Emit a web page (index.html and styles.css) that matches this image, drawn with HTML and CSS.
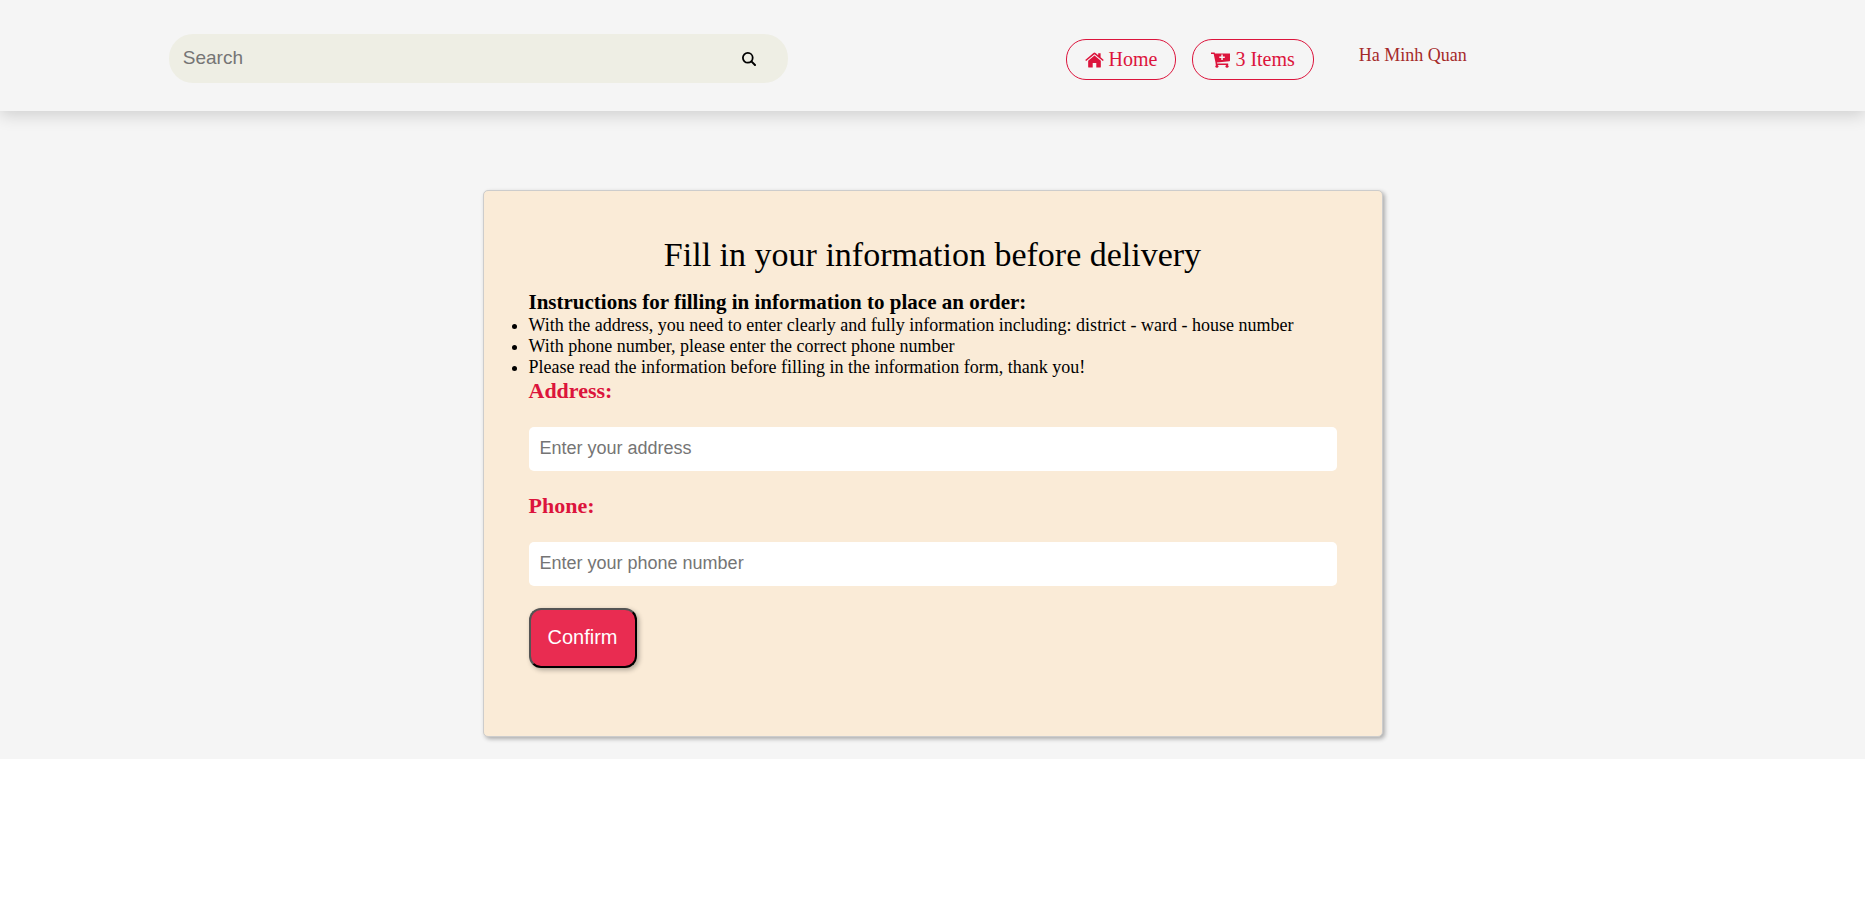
FILE: index.html
```html
<!DOCTYPE html>
<html lang="en">
<head>
<meta charset="utf-8">
<meta name="viewport" content="width=device-width, initial-scale=1">
<title>Delivery information</title>
<link rel="stylesheet" href="styles.css">
</head>
<body>
<div class="page">
  <header class="header">
    <form class="search" role="search">
      <input class="search-input" type="search" placeholder="Search" aria-label="Search">
      <button class="search-button" type="submit" aria-label="Search">
        <svg class="search-icon" viewBox="0 0 14 14" aria-hidden="true"><circle cx="5.8" cy="5.8" r="4.9" fill="none" stroke="currentColor" stroke-width="1.8"/><path d="M9.4 9.4l3.600 3.600" stroke="currentColor" stroke-width="2" stroke-linecap="round"/></svg>
      </button>
    </form>
    <nav class="nav">
      <a class="pill" href="#"><svg class="pill-icon" viewBox="0 0 18 15" aria-hidden="true"><path fill="currentColor" d="M9 3.300l6 5V13.800a.8.8 0 0 1-.8.8h-3.500v-4.200H7.300v4.200H3.800a.8.8 0 0 1-.8-.8V8.300z"/><path fill="currentColor" d="M.2 7.500L8 .8a1.500 1.500 0 0 1 2 0l2.500 2.200V1h2.300v4L17.800 7.500l-.9 1L9 2 1.100 8.500z"/></svg><span>Home</span></a>
      <a class="pill" href="#"><svg class="pill-icon" viewBox="0 0 19 16" aria-hidden="true"><path fill="currentColor" fill-rule="evenodd" d="M0 .5h3.600l.4 1H19v7a.7.7 0 0 1-.6.7L6 10.500l.2 1H17.200v1.400H4.800L4.400 10 2.700 1.900H0zM10.300 2.600v2H8.300v1.500h2v2h1.500v-2h2V4.600h-2v-2z"/><circle cx="5.900" cy="14.300" r="1.500" fill="currentColor"/><circle cx="16" cy="14.300" r="1.500" fill="currentColor"/></svg><span>3 Items</span></a>
      <a class="user" href="#">Ha Minh Quan</a>
    </nav>
  </header>
  <main class="main">
    <form class="card">
      <h1 class="title">Fill in your information before delivery</h1>
      <h2 class="subtitle">Instructions for filling in information to place an order:</h2>
      <ul class="notes">
        <li>With the address, you need to enter clearly and fully information including: district - ward - house number</li>
        <li>With phone number, please enter the correct phone number</li>
        <li>Please read the information before filling in the information form, thank you!</li>
      </ul>
      <label class="label" for="address">Address:</label>
      <input class="field" id="address" type="text" placeholder="Enter your address">
      <label class="label" for="phone">Phone:</label>
      <input class="field" id="phone" type="tel" placeholder="Enter your phone number">
      <button class="confirm" type="submit">Confirm</button>
    </form>
  </main>
</div>
</body>
</html>
```
FILE: styles.css
```css
* {
  box-sizing: border-box;
  margin: 0;
  padding: 0;
}

body {
  background: #fff;
  color: #000;
  font-family: "Liberation Serif", "Times New Roman", serif;
  font-size: 18px;
}

.page {
  background: #f5f5f5;
  padding-bottom: 22px;
}

.header {
  display: flex;
  justify-content: space-between;
  align-items: flex-start;
  padding: 34px 21.35% 28px 9.05%;
  box-shadow: 0 4px 16px rgba(0, 0, 0, 0.16);
}

.search {
  display: flex;
  align-items: center;
  width: 47.7%;
  height: 49px;
  padding: 0 32px 0 14px;
  border-radius: 24px;
  background: #eeeee4;
}

.search-input {
  flex: 1;
  min-width: 0;
  border: 0;
  outline: 0;
  background: transparent;
  font-family: "Liberation Sans", Arial, sans-serif;
  font-size: 19px;
  padding-bottom: 2px;
}

.search-input::placeholder,
.field::placeholder {
  color: #757575;
}

.search-button {
  display: flex;
  border: 0;
  background: transparent;
  color: #000;
}

.search-icon {
  width: 14px;
  height: 14px;
}

.nav {
  display: flex;
  align-items: flex-start;
  gap: 16px;
  padding-top: 5px;
}

.pill {
  display: flex;
  align-items: center;
  gap: 5px;
  height: 41px;
  padding: 0 18px;
  border: 1px solid #dc143c;
  border-radius: 20px;
  color: #dc143c;
  font-size: 20px;
  white-space: nowrap;
  text-decoration: none;
}

.pill-icon {
  width: 19px;
  height: 16px;
}

.user {
  margin-left: 29px;
  padding-top: 6px;
  color: #a52a2a;
  white-space: nowrap;
  text-decoration: none;
}

.main {
  display: flex;
  justify-content: center;
  padding-top: 79px;
}

.card {
  display: flex;
  flex-direction: column;
  width: 100%;
  max-width: 900px;
  padding: 45px 45px 68px;
  border: 1px solid #ccc;
  border-radius: 5px;
  background: #faebd7;
  box-shadow: 2px 2px 4px rgba(0, 0, 0, 0.3);
}

.title {
  margin-bottom: 16px;
  text-align: center;
  font-size: 34px;
  font-weight: 400;
}

.subtitle {
  font-size: 21px;
  line-height: 25px;
}

.notes {
  line-height: 21px;
}

.label {
  margin-bottom: 24px;
  color: #dc143c;
  font-size: 22px;
  font-weight: 700;
  line-height: 25px;
}

.field {
  height: 44px;
  margin-bottom: 22px;
  padding: 0 11px 2px;
  border: 0;
  border-radius: 5px;
  background: #fff;
  font-family: "Liberation Sans", Arial, sans-serif;
  font-size: 18px;
}

.confirm {
  align-self: flex-start;
  height: 60px;
  padding: 0 17px 2px;
  border: 2px outset #000;
  border-radius: 12px;
  background: #e92c51;
  box-shadow: 2px 2px 5px rgba(0, 0, 0, 0.3);
  color: #fff;
  font-family: "Liberation Sans", Arial, sans-serif;
  font-size: 20px;
}
```
